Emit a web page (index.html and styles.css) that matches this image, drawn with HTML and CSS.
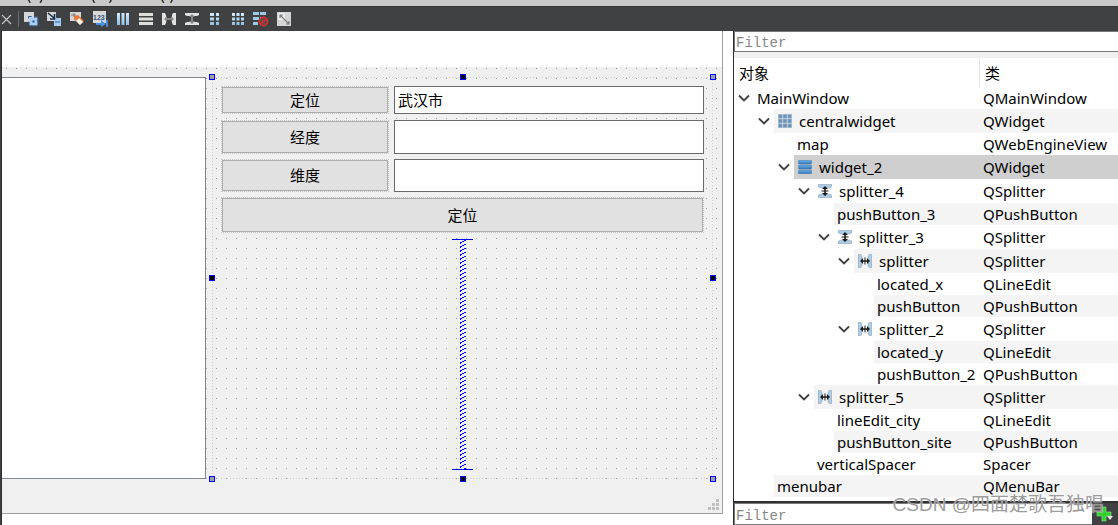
FILE: index.html
```html
<!DOCTYPE html>
<html lang="zh">
<head>
<meta charset="utf-8">
<title>Qt Designer</title>
<link rel="stylesheet" href="styles.css">
</head>
<body>
<svg class="defs" aria-hidden="true">
  <defs>
    <linearGradient id="blue" x1="0" y1="0" x2="0" y2="1"><stop offset="0" stop-color="#d5ecfa"/><stop offset="1" stop-color="#8fbfe3"/></linearGradient>
    <linearGradient id="deep" x1="0" y1="0" x2="0" y2="1"><stop offset="0" stop-color="#6fb0e6"/><stop offset="1" stop-color="#3478b8"/></linearGradient>
    <symbol id="chev" viewBox="0 0 12 8"><path d="M1 1.5 6 6.5 11 1.5" fill="none" stroke="#404040" stroke-width="1.8"/></symbol>
    <symbol id="grid" viewBox="0 0 14 14"><g fill="#6f93b5" stroke="#a5bdd3" stroke-width=".6"><path d="M.3.3h4v4h-4zM5 .3h4v4H5zM9.700.3h4v4h-4zM.3 5h4v4h-4zM5 5h4v4H5zM9.700 5h4v4h-4zM.3 9.700h4v4h-4zM5 9.700h4v4H5zM9.700 9.700h4v4h-4z"/></g></symbol>
    <symbol id="vbox" viewBox="0 0 14 14"><g fill="url(#deep)" stroke="#3c75a8" stroke-width=".5"><rect x=".3" y=".3" width="13.4" height="3.8" rx="1"/><rect x=".3" y="5.1" width="13.4" height="3.8" rx="1"/><rect x=".3" y="9.9" width="13.4" height="3.8" rx="1"/></g></symbol>
    <symbol id="vsplit" viewBox="0 0 14 14"><path d="M.4.4h13.200v2.400l-2 1H2.400l-2-1zM.4 13.600h13.200v-2.400l-2-1H2.400l-2 1z" fill="#a9cfe9" stroke="#8199ac" stroke-width=".6"/><path d="M7 2 10 5H7.800v4H10l-3 3-3-3h2.200V5H4zM3.500 6.500h7v1h-7z" fill="#1c1c1c"/></symbol>
    <symbol id="hsplit" viewBox="0 0 14 14"><path d="M.4.4v13.200h2.400l1-2V2.400l-1-2zM13.600.4v13.200h-2.400l-1-2V2.400l1-2z" fill="#a9cfe9" stroke="#8199ac" stroke-width=".6"/><path d="M2 7 5 4v2.200h4V4l3 3-3 3V7.800H5V10zM6.500 3.500h1v7h-1z" fill="#1c1c1c"/></symbol>
  </defs>
</svg>

<div class="app">
  <nav class="menubar" aria-label="菜单"><span>(E)</span><span>(W)</span><span>(I)</span></nav>

  <div class="toolbar" role="toolbar">
    <button class="tool close" aria-label="关闭"><svg viewBox="0 0 11 11"><path d="M1 1l9 9M10 1l-9 9" stroke="#c4c4c4" stroke-width="1.2"/></svg></button>
    <span class="divider"></span>
    <button class="tool" aria-label="编辑控件"><svg viewBox="0 0 16 16"><path d="M1 1h10v10H1z" fill="#d6d6d6"/><path d="M6.500 6.500h8v8h-8z" fill="#a9cdf2"/><path d="M5.500 5.500h9.500v9.500H5.500z" fill="none" stroke="#2d5c9b" stroke-dasharray="3 3"/><path d="M9.500 9.500h2v2h-2z" fill="#1d5bab"/></svg></button>
    <button class="tool" aria-label="编辑信号/槽"><svg viewBox="0 0 16 16"><path d="M1 1h9v9H1z" fill="#d6d6d6"/><path d="M8 7h7v8H8z" fill="#a9cdf2"/><path d="M9 11h5" stroke="#2864a8"/><path d="M2 2l6 5M8.500 3v5H4" fill="none" stroke="#16334e" stroke-width="1.600"/></svg></button>
    <button class="tool" aria-label="编辑伙伴"><svg viewBox="0 0 16 16"><path d="M1 1h11v9H1z" fill="#d6d6d6"/><path d="M2 4h5M5 2v4" stroke="#777"/><path d="M5 5l4-1 6 6-4 4-6-6z" fill="#e77835"/><path d="M10 7l4 4-3 3-4-4z" fill="#fff4e8"/></svg></button>
    <button class="tool" aria-label="编辑Tab顺序"><svg viewBox="0 0 16 16"><path d="M1 0h13v12H1z" fill="#d8d8d8"/><text x="1" y="9" class="digits">123</text><path d="M4 13h7M15 9v7" stroke="#4b91e3" stroke-width="1.800"/><path d="M9 9l5 4-5 3z" fill="#4b91e3"/></svg></button>
    <button class="tool" aria-label="水平布局"><svg viewBox="0 0 16 16"><path d="M2 2h3v12H2zM6.500 2h3v12h-3zM11 2h3v12h-3z" fill="url(#blue)"/></svg></button>
    <button class="tool" aria-label="垂直布局"><svg viewBox="0 0 16 16"><path d="M1 2h14v3H1zM1 6.500h14v3H1zM1 11h14v3H1z" fill="#dededa"/></svg></button>
    <button class="tool" aria-label="使用分裂器水平布局"><svg viewBox="0 0 16 16"><path d="M1 2h3l1 2v8l-1 2H1zM15 2h-3l-1 2v8l1 2h3z" fill="#e2e2e2"/><path d="M3 8l3-3v2h4V5l3 3-3 3V9H6v2z" fill="#858585"/></svg></button>
    <button class="tool" aria-label="使用分裂器垂直布局"><svg viewBox="0 0 16 16"><path d="M1 2h14v2l-2 1H3L1 4zM1 14h14v-2l-2-1H3l-2 1z" fill="#e2e2e2"/><path d="M8 3l3 3H9v4h2l-3 3-3-3h2V6H5z" fill="#858585"/></svg></button>
    <button class="tool" aria-label="表单布局"><svg viewBox="0 0 16 16"><path d="M3 2h4v3H3zM9 2h3v3H9zM3 6.500h4v3H3zM9 6.500h3v3H9zM3 11h4v3H3zM9 11h3v3H9z" fill="url(#blue)"/></svg></button>
    <button class="tool" aria-label="栅格布局"><svg viewBox="0 0 16 16"><path d="M2 2h3v3H2zM6.500 2h3v3h-3zM11 2h3v3h-3zM2 6.500h3v3H2zM6.500 6.500h3v3h-3zM11 6.500h3v3h-3zM2 11h3v3H2zM6.500 11h3v3h-3zM11 11h3v3h-3z" fill="url(#blue)"/></svg></button>
    <button class="tool" aria-label="打破布局"><svg viewBox="0 0 16 16"><path d="M0 1h6v3H0zM7 1h6v3H7zM0 6h6v3H0zM7 6h5v3H7zM0 11h5v3H0z" fill="#9ccbea"/><circle cx="10.500" cy="10.500" r="4.200" fill="#704444" stroke="#d52f2f" stroke-width="1.600"/><path d="M8 13l5-5" stroke="#d52f2f" stroke-width="1.400"/></svg></button>
    <button class="tool" aria-label="调整大小"><svg viewBox="0 0 16 16"><path d="M1 1h14v14H1z" fill="#d4d4d4"/><path d="M2 2h7v7H2z" fill="#ececec"/><path d="M4 4l9 9M4 7V4h3M13 10v3h-3" fill="none" stroke="#7c7c7c" stroke-width="1.200"/></svg></button>
  </div>

  <div class="workspace">
    <main class="editor">
      <section class="form">
        <div class="form-menu"></div>
        <div class="central">
          <div class="map"></div>
          <div class="panel">
            <div class="pair first">
              <button class="push">定位</button>
              <input class="edit" type="text" value="武汉市" aria-label="定位">
            </div>
            <div class="group">
              <div class="pair second">
                <button class="push">经度</button>
                <input class="edit" type="text" aria-label="经度">
              </div>
              <div class="pair third">
                <button class="push">维度</button>
                <input class="edit" type="text" aria-label="维度">
              </div>
              <button class="push wide">定位</button>
            </div>
            <div class="spacer">
              <svg width="100%" height="100%" aria-hidden="true">
                <defs><pattern id="spring" x="8" y="0" width="6" height="4" patternUnits="userSpaceOnUse"><path d="M4 0h2v1H4zM2 1h2v1H2zM0 2h2v1H0zM0 3h1v1H0z" fill="#0000f0"/></pattern></defs>
                <rect x="8" width="6" height="100%" fill="url(#spring)" shape-rendering="crispEdges"/>
              </svg>
            </div>
            <i class="handle corner t l"></i><i class="handle t c"></i><i class="handle corner t r"></i>
            <i class="handle m l"></i><i class="handle m r"></i>
            <i class="handle corner b l"></i><i class="handle b c"></i><i class="handle corner b r"></i>
          </div>
        </div>
        <div class="statusbar">
          <svg class="grip" viewBox="0 0 11 11" aria-hidden="true"><path d="M8 0h3v3H8zM4 4h3v3H4zM8 4h3v3H8zM0 8h3v3H0zM4 8h3v3H4zM8 8h3v3H8z" fill="#bfbfbf"/></svg>
        </div>
      </section>
    </main>

    <aside class="dock">
      <input class="filter" type="text" placeholder="Filter" aria-label="Filter objects">
      <div class="tree">
        <table>
          <thead><tr><th class="name-col">对象</th><th>类</th></tr></thead>
          <tbody>
            <tr class="d0"><td><div class="cell"><button class="toggle" aria-label="折叠"><svg><use href="#chev"/></svg></button><span class="item">MainWindow</span></div></td><td>QMainWindow</td></tr>
            <tr class="d1 alt tall"><td><div class="cell"><button class="toggle" aria-label="折叠"><svg><use href="#chev"/></svg></button><span class="item"><svg class="ico"><use href="#grid"/></svg>centralwidget</span></div></td><td>QWidget</td></tr>
            <tr class="d2"><td><div class="cell"><span class="item">map</span></div></td><td>QWebEngineView</td></tr>
            <tr class="d2 selected tall"><td><div class="cell"><button class="toggle" aria-label="折叠"><svg><use href="#chev"/></svg></button><span class="item"><svg class="ico"><use href="#vbox"/></svg>widget_2</span></div></td><td>QWidget</td></tr>
            <tr class="d3 tall"><td><div class="cell"><button class="toggle" aria-label="折叠"><svg><use href="#chev"/></svg></button><span class="item"><svg class="ico"><use href="#vsplit"/></svg>splitter_4</span></div></td><td>QSplitter</td></tr>
            <tr class="d4 alt"><td><div class="cell"><span class="item">pushButton_3</span></div></td><td>QPushButton</td></tr>
            <tr class="d4 tall"><td><div class="cell"><button class="toggle" aria-label="折叠"><svg><use href="#chev"/></svg></button><span class="item"><svg class="ico"><use href="#vsplit"/></svg>splitter_3</span></div></td><td>QSplitter</td></tr>
            <tr class="d5 alt tall"><td><div class="cell"><button class="toggle" aria-label="折叠"><svg><use href="#chev"/></svg></button><span class="item"><svg class="ico"><use href="#hsplit"/></svg>splitter</span></div></td><td>QSplitter</td></tr>
            <tr class="d6"><td><div class="cell"><span class="item">located_x</span></div></td><td>QLineEdit</td></tr>
            <tr class="d6 alt"><td><div class="cell"><span class="item">pushButton</span></div></td><td>QPushButton</td></tr>
            <tr class="d5 tall"><td><div class="cell"><button class="toggle" aria-label="折叠"><svg><use href="#chev"/></svg></button><span class="item"><svg class="ico"><use href="#hsplit"/></svg>splitter_2</span></div></td><td>QSplitter</td></tr>
            <tr class="d6 alt"><td><div class="cell"><span class="item">located_y</span></div></td><td>QLineEdit</td></tr>
            <tr class="d6"><td><div class="cell"><span class="item">pushButton_2</span></div></td><td>QPushButton</td></tr>
            <tr class="d3 alt tall"><td><div class="cell"><button class="toggle" aria-label="折叠"><svg><use href="#chev"/></svg></button><span class="item"><svg class="ico"><use href="#hsplit"/></svg>splitter_5</span></div></td><td>QSplitter</td></tr>
            <tr class="d4"><td><div class="cell"><span class="item">lineEdit_city</span></div></td><td>QLineEdit</td></tr>
            <tr class="d4 alt"><td><div class="cell"><span class="item">pushButton_site</span></div></td><td>QPushButton</td></tr>
            <tr class="d3"><td><div class="cell"><span class="item">verticalSpacer</span></div></td><td>Spacer</td></tr>
            <tr class="d1 alt"><td><div class="cell"><span class="item">menubar</span></div></td><td>QMenuBar</td></tr>
          </tbody>
        </table>
      </div>
      <div class="properties">
        <input class="filter" type="text" placeholder="Filter" aria-label="Filter properties">
        <button class="add" aria-label="添加"><svg viewBox="0 0 18 16"><path d="M6 1h4v5h5v4h-5v5H6v-5H1V6h5z" fill="#2fd02f" stroke="#8cf07a" stroke-width=".6"/><path d="M11 10h6l-3 4z" fill="#e8e8e8"/></svg></button>
      </div>
    </aside>
  </div>
  <div class="watermark">CSDN @四面楚歌吾独唱</div>
</div>
</body>
</html>
```

FILE: styles.css
```css
* { box-sizing: border-box; }

body {
  margin: 0;
  background: #404142;
  color: #000;
  font-family: "Noto Sans", "Noto Sans CJK SC", sans-serif;
}

button { padding: 0; border: 0; background: none; font: inherit; color: inherit; }
input { border-radius: 0; outline: 0; color: #000; }
svg { display: block; }
.defs { position: absolute; width: 0; height: 0; }

.app {
  position: relative;
  display: flex;
  flex-direction: column;
  height: 100vh;
  overflow: hidden;
}

/* menu bar and tool bar */
.menubar {
  flex: none;
  display: flex;
  align-items: flex-end;
  gap: 48px;
  height: 6px;
  padding: 0 0 4px 27px;
  overflow: hidden;
  background: #c9c9c9;
  font-size: 14px;
  line-height: 14px;
}

.toolbar {
  flex: none;
  display: flex;
  align-items: center;
  gap: 7px;
  height: 25px;
  background: #404142;
  border-top: 1px solid #303132;
}
.tool, .tool svg { width: 16px; height: 16px; }
.tool.close, .tool.close svg { width: 11px; height: 11px; }
.tool.close { margin-left: 1px; }
.divider { width: 1px; height: 16px; margin: 0 -3px 0 -1px; background: #6c6d6e; }
.digits { font: bold 7px "Liberation Sans", sans-serif; fill: #35557e; }

.workspace {
  flex: 1;
  display: flex;
  min-height: 0;
}

/* form editor */
.editor {
  flex: 1;
  display: flex;
  margin-left: 1px;
  padding: 0 10px 11px 0;
  border-left: 1px solid #2b2c2d;
  background: #fff;
}
.form {
  flex: 1;
  display: flex;
  flex-direction: column;
  background: #f0f0f0;
  border-right: 1px solid #a0a0a0;
  border-bottom: 1px solid #a0a0a0;
}
.form-menu { height: 36px; background: #fff; }
.central {
  flex: 1;
  display: grid;
  grid-template-columns: minmax(0, 204fr) minmax(0, 501fr);
  gap: 6px;
  padding: 10px 9px 0 0;
  background:
    linear-gradient(90deg, transparent 1px, #f0f0f0 1px) 4px 1px / 10px 10px,
    linear-gradient(#a0a0a0 1px, #f0f0f0 1px) 4px 1px / 10px 10px;
}
.map {
  background: #fff;
  border: 1px solid #828790;
  border-left: 0;
}
.panel {
  position: relative;
  display: flex;
  flex-direction: column;
  gap: 6px;
  padding: 9px;
  background:
    repeating-linear-gradient(90deg, #d0d0d0 0 1px, transparent 1px 3px) top / 100% 1px no-repeat,
    repeating-linear-gradient(90deg, #d0d0d0 0 1px, transparent 1px 3px) bottom / 100% 1px no-repeat,
    repeating-linear-gradient(#d0d0d0 0 1px, transparent 1px 3px) left / 1px 100% no-repeat,
    repeating-linear-gradient(#d0d0d0 0 1px, transparent 1px 3px) right / 1px 100% no-repeat;
}
.pair {
  display: grid;
  grid-template-columns: 168fr 310fr;
  gap: 5px;
  background: #f0f0f0;
}
.first { height: 28px; }
.second { height: 34px; }
.third { height: 33px; }
.group { display: flex; flex-direction: column; gap: 5px; background: #f0f0f0; }
.push, .edit {
  min-width: 0;
  font-family: "Noto Sans CJK SC", sans-serif;
  font-size: 15px;
}
.push {
  margin: 1px;
  padding-bottom: 2px;
  border: 1px solid #adadad;
  outline: 1px dotted #c8c8c8;
  background: #e1e1e1;
}
.wide { height: 34px; }
.edit {
  padding: 0 3px 2px;
  border: 1px solid #6a6a6a;
  background: #fff;
}
.spacer {
  flex: 1;
  align-self: center;
  width: 21px;
  min-height: 0;
  border-top: 1px solid #0000f0;
  border-bottom: 1px solid #0000f0;
}

/* selection handles sit over the panel's edge */
.handle {
  position: absolute;
  width: 6px;
  height: 6px;
  border: 1px solid #00f;
  background: #000;
}
.corner { background: #a0a0a0; }
.t { top: -3px; }
.b { bottom: -3px; }
.l { left: -3px; }
.r { right: -3px; }
.c { left: calc(50% - 3px); }
.m { top: calc(50% - 3px); }

.statusbar {
  height: 34px;
  display: flex;
  justify-content: flex-end;
  align-items: flex-end;
  padding: 3px;
}
.grip { width: 11px; height: 11px; }

/* object inspector */
.dock {
  flex: none;
  width: 385px;
  display: flex;
  flex-direction: column;
  border-left: 1px solid #2b2c2d;
  background: #f0f0f0;
}
.filter {
  width: 100%;
  height: 21px;
  padding: 2px 1px 0;
  border: 1px solid #7a7a7a;
  border-right: 0;
  background: #fff;
  font-family: "Liberation Mono", monospace;
  font-size: 14px;
}
.filter::placeholder { color: #858585; }
.tree {
  flex: 1;
  margin-top: 6px;
  min-height: 0;
  overflow: hidden;
  background: #fff;
}
table {
  width: 100%;
  table-layout: fixed;
  border-spacing: 0;
  font-size: 15px;
  line-height: 20px;
}
th, td { padding: 0; text-align: left; font-weight: 400; white-space: nowrap; }
th { height: 29px; padding: 0 5px; }
.name-col { width: 246px; border-right: 1px solid #e5e5e5; }
td { height: 22px; }
td + td { padding-left: 3px; }
.tall td { height: 24px; }
.cell { display: flex; height: 22px; }
.tall .cell { height: 24px; }
.toggle { flex: none; width: 20px; margin-left: -20px; padding-left: 4px; }
.toggle svg { width: 12px; height: 8px; }
.item { flex: 1; display: flex; align-items: center; gap: 7px; padding-left: 3px; }
.ico { width: 14px; height: 14px; margin-left: 1px; }
.alt .item, .alt td + td { background: #f4f4f4; }
.selected .item, .selected td + td { background: #cfcfcf; }
.d0 .cell { padding-left: 20px; }
.d1 .cell { padding-left: 40px; }
.d2 .cell { padding-left: 60px; }
.d3 .cell { padding-left: 80px; }
.d4 .cell { padding-left: 100px; }
.d5 .cell { padding-left: 120px; }
.d6 .cell { padding-left: 140px; }

.properties {
  flex: none;
  display: flex;
  border-top: 2px solid #303132;
  background: #404142;
}
.properties .filter { flex: 1; height: 22px; padding-top: 3px; }
.add { width: 26px; padding-left: 4px; }
.add svg { width: 18px; height: 16px; }

.watermark {
  position: absolute;
  right: 14px;
  bottom: 6px;
  color: rgba(130, 130, 130, 0.8);
  font-family: "Liberation Sans", "Noto Sans CJK SC", sans-serif;
  font-size: 19px;
  line-height: 28px;
  text-shadow: 0 0 1px #fff;
  pointer-events: none;
}
```
